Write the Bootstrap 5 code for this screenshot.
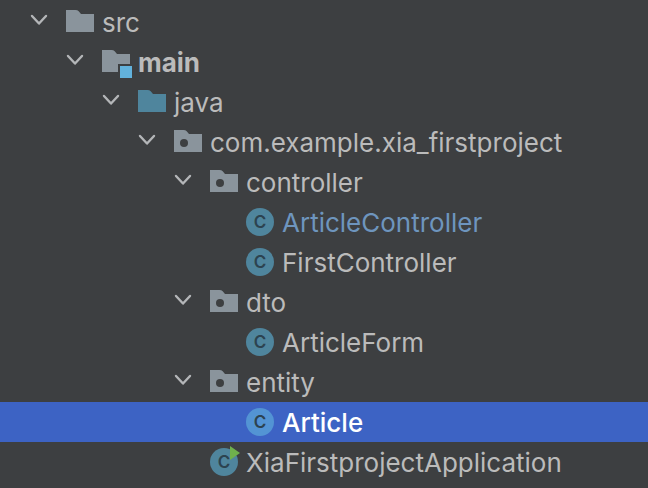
<!DOCTYPE html>
<html lang="en" data-bs-theme="dark">
<head>
<meta charset="utf-8">
<meta name="viewport" content="width=device-width, initial-scale=1">
<title>Project tree</title>
<link href="https://cdn.jsdelivr.net/npm/bootstrap@5.3.0/dist/css/bootstrap.min.css" rel="stylesheet">
<style>
  body { background: #3d3f41; color: #bbbbbb; font-family: Inter, "Liberation Sans", sans-serif; font-size: 26px; line-height: 40px; }
  .project-tree { padding-top: 2px; }
  .tree-row { height: 40px; padding-left: calc(30px + 36px * var(--depth)); }
  .depth-0 { --depth: 0; }
  .depth-1 { --depth: 1; }
  .depth-2 { --depth: 2; }
  .depth-3 { --depth: 3; }
  .depth-4 { --depth: 4; }
  .depth-5 { --depth: 5; }
  .toggle, .toggle-gap { width: 18px; margin-right: 18px; flex: none; }
  .toggle { height: 18px; color: #b4b6b8; line-height: 1; }
  .toggle svg { width: 18px; height: 16px; }
  .node-icon { width: 28px; height: 28px; margin-right: 8px; flex: none; overflow: visible; }
  .node-icon + span { padding-top: 2px; }
  .letter { font-family: Inter, sans-serif; font-size: 17px; font-weight: 600; fill: #2c4350; }
  .dot { fill: #3d3f41; }
  .changed { color: #6e95be; }
  .selected { background: #3d63c4; color: #ffffff; }
  .selected span { font-weight: 500; }
  .disc { fill: #4f859d; }
  .selected .disc { fill: #5394d4; }
</style>
</head>
<body>
<svg class="d-none" aria-hidden="true">
  <symbol id="chevron" viewBox="0 0 18 16"><path d="M2 3l7 7.500L16 3" fill="none" stroke="currentColor" stroke-width="2.400" stroke-linecap="round" stroke-linejoin="round"/></symbol>
  <symbol id="folder" viewBox="0 0 28 28"><path d="M0 2h9.500q2 0 3.200 1.300L15 6h13v18H0z" fill="currentColor"/></symbol>
</svg>
<main>
<ul class="project-tree list-unstyled mb-0 text-nowrap overflow-hidden" aria-label="Project files">
  <li>
    <div class="tree-row depth-0 d-flex align-items-center">
      <button class="toggle btn border-0 p-0 d-flex" type="button" aria-expanded="true" aria-label="Collapse src"><svg><use href="#chevron"/></svg></button>
      <svg class="node-icon" color="#8a949c"><use href="#folder"/></svg><span>src</span>
    </div>
    <ul class="list-unstyled">
      <li>
        <div class="tree-row depth-1 d-flex align-items-center">
          <button class="toggle btn border-0 p-0 d-flex" type="button" aria-expanded="true" aria-label="Collapse main"><svg><use href="#chevron"/></svg></button>
          <svg class="node-icon" viewBox="0 0 28 28"><path d="M0 2h9.500q2 0 3.200 1.300L15 6h13v10H16v8H0z" fill="#8a949c"/><path d="M18 18h12v12H18z" fill="#62b2dc"/></svg><span class="fw-bold">main</span>
        </div>
        <ul class="list-unstyled">
          <li>
            <div class="tree-row depth-2 d-flex align-items-center">
              <button class="toggle btn border-0 p-0 d-flex" type="button" aria-expanded="true" aria-label="Collapse java"><svg><use href="#chevron"/></svg></button>
              <svg class="node-icon" color="#4f859d"><use href="#folder"/></svg><span>java</span>
            </div>
            <ul class="list-unstyled">
              <li>
                <div class="tree-row depth-3 d-flex align-items-center">
                  <button class="toggle btn border-0 p-0 d-flex" type="button" aria-expanded="true" aria-label="Collapse package"><svg><use href="#chevron"/></svg></button>
                  <svg class="node-icon" color="#8a949c"><use href="#folder"/><circle class="dot" cx="10" cy="15" r="4"/></svg><span>com.example.xia_firstproject</span>
                </div>
                <ul class="list-unstyled">
                  <li>
                    <div class="tree-row depth-4 d-flex align-items-center">
                      <button class="toggle btn border-0 p-0 d-flex" type="button" aria-expanded="true" aria-label="Collapse controller"><svg><use href="#chevron"/></svg></button>
                      <svg class="node-icon" color="#8a949c"><use href="#folder"/><circle class="dot" cx="10" cy="15" r="4"/></svg><span>controller</span>
                    </div>
                    <ul class="list-unstyled">
                      <li class="tree-row depth-5 d-flex align-items-center"><span class="toggle-gap"></span><svg class="node-icon"><circle class="disc" cx="14" cy="14" r="14"/><text class="letter" x="14" y="20" text-anchor="middle">C</text></svg><span class="changed">ArticleController</span></li>
                      <li class="tree-row depth-5 d-flex align-items-center"><span class="toggle-gap"></span><svg class="node-icon"><circle class="disc" cx="14" cy="14" r="14"/><text class="letter" x="14" y="20" text-anchor="middle">C</text></svg><span>FirstController</span></li>
                    </ul>
                  </li>
                  <li>
                    <div class="tree-row depth-4 d-flex align-items-center">
                      <button class="toggle btn border-0 p-0 d-flex" type="button" aria-expanded="true" aria-label="Collapse dto"><svg><use href="#chevron"/></svg></button>
                      <svg class="node-icon" color="#8a949c"><use href="#folder"/><circle class="dot" cx="10" cy="15" r="4"/></svg><span>dto</span>
                    </div>
                    <ul class="list-unstyled">
                      <li class="tree-row depth-5 d-flex align-items-center"><span class="toggle-gap"></span><svg class="node-icon"><circle class="disc" cx="14" cy="14" r="14"/><text class="letter" x="14" y="20" text-anchor="middle">C</text></svg><span>ArticleForm</span></li>
                    </ul>
                  </li>
                  <li>
                    <div class="tree-row depth-4 d-flex align-items-center">
                      <button class="toggle btn border-0 p-0 d-flex" type="button" aria-expanded="true" aria-label="Collapse entity"><svg><use href="#chevron"/></svg></button>
                      <svg class="node-icon" color="#8a949c"><use href="#folder"/><circle class="dot" cx="10" cy="15" r="4"/></svg><span>entity</span>
                    </div>
                    <ul class="list-unstyled">
                      <li class="tree-row depth-5 selected d-flex align-items-center" aria-current="true"><span class="toggle-gap"></span><svg class="node-icon"><circle class="disc" cx="14" cy="14" r="14"/><text class="letter" x="14" y="20" text-anchor="middle">C</text></svg><span>Article</span></li>
                    </ul>
                  </li>
                  <li class="tree-row depth-4 d-flex align-items-center"><span class="toggle-gap"></span><svg class="node-icon"><circle class="disc" cx="14" cy="14" r="14"/><text class="letter" x="14" y="20" text-anchor="middle">C</text><path d="M20-2l10 7-10 7z" fill="#6fb04c"/></svg><span>XiaFirstprojectApplication</span></li>
                </ul>
              </li>
            </ul>
          </li>
        </ul>
      </li>
    </ul>
  </li>
</ul>
</main>
<script src="https://cdn.jsdelivr.net/npm/bootstrap@5.3.0/dist/js/bootstrap.bundle.min.js"></script>
</body>
</html>
